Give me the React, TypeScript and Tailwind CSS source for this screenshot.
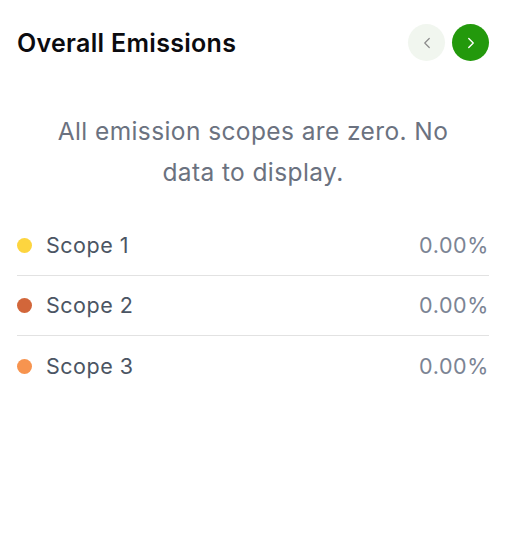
import { ChevronLeft, ChevronRight } from "lucide-react";

const scopes = [
  { name: "Scope 1", color: "bg-[#fdd53f]", value: "0.00%" },
  { name: "Scope 2", color: "bg-[#d2663a]", value: "0.00%" },
  { name: "Scope 3", color: "bg-[#f7944f]", value: "0.00%" },
];

export default function App() {
  return (
    <div className="h-[540px] w-[505px] bg-white pl-[17px] pr-[16px] pt-[24px] font-['Inter',sans-serif]">
      <div className="flex items-center justify-between">
        <h2 className="text-[25px] font-semibold leading-[36px] tracking-[0.3px] text-[#0b0b0f]">
          Overall Emissions
        </h2>
        <div className="flex items-center gap-[7px]">
          <button
            type="button"
            className="flex h-[37px] w-[37px] items-center justify-center rounded-full bg-[#f1f6ef] text-[#8a8a8a]"
          >
            <ChevronLeft size={18} strokeWidth={1.6} />
          </button>
          <button
            type="button"
            className="flex h-[37px] w-[37px] items-center justify-center rounded-full bg-[#23990c] text-white"
          >
            <ChevronRight size={18} strokeWidth={1.8} />
          </button>
        </div>
      </div>

      <p className="mx-auto mt-[50px] w-[420px] text-center text-[24.5px] leading-[41px] tracking-[0.4px] text-[#6b7280]">
        All emission scopes are zero. No data to display.
      </p>

      <ul className="mt-[23px]">
        {scopes.map((s, i) => (
          <li
            key={s.name}
            className={`flex h-[60px] items-center justify-between ${
              i < scopes.length - 1 ? "border-b border-[#e2e2e2]" : ""
            }`}
          >
            <div className="flex items-center gap-[14px]">
              <span className={`h-[15px] w-[15px] rounded-full ${s.color}`} />
              <span className="text-[21.5px] tracking-[0.5px] text-[#4b5563]">{s.name}</span>
            </div>
            <span className="text-[21.5px] tracking-[0.6px] text-[#7b8494]">{s.value}</span>
          </li>
        ))}
      </ul>
    </div>
  );
}
